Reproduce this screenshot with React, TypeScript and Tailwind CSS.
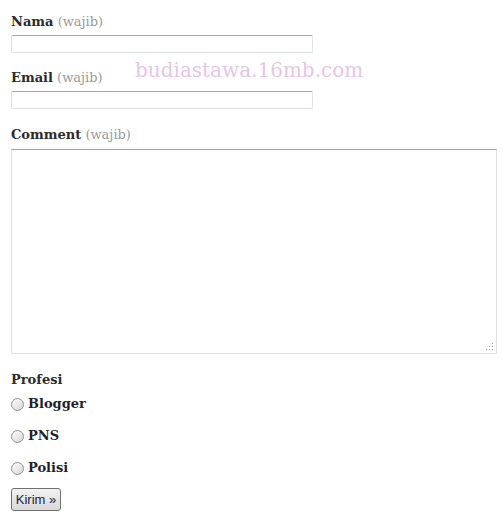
const serif = { fontFamily: '"DejaVu Serif", Georgia, serif' }

function Label({ text, wajib }: { text: string; wajib?: boolean }) {
  return (
    <div className="h-[20px] text-[13px] leading-[24px] text-[#2b2b2b]" style={serif}>
      <span className="font-bold">{text}</span>
      {wajib && <span className="text-[#9a9a9a]"> (wajib)</span>}
    </div>
  )
}

function Radio({ text }: { text: string }) {
  return (
    <div className="flex h-[20px] items-center gap-[4px]">
      <span className="h-[13px] w-[13px] rounded-full border border-[#8f8f8f] bg-gradient-to-br from-[#ffffff] to-[#d4d4d4]" />
      <span className="text-[13px] font-bold leading-[20px] text-[#1f1f2e]" style={serif}>
        {text}
      </span>
    </div>
  )
}

export default function App() {
  return (
    <div className="relative h-[523px] w-[503px] bg-white px-[11px] pt-[10px]">
      <Label text="Nama" wajib />
      <div className="mt-[5px] h-[18px] w-[302px] rounded-[2px] border border-[#dfe1e6] border-t-[#a5a5a5]" />

      <div className="mt-[13px]">
        <Label text="Email" wajib />
      </div>
      <div className="mt-[5px] h-[18px] w-[302px] rounded-[2px] border border-[#dfe1e6] border-t-[#a5a5a5]" />

      <div className="mt-[14px]">
        <Label text="Comment" wajib />
      </div>
      <div className="relative mt-[6px] h-[205px] w-[486px] border border-[#dfe1e6] border-t-[#a5a5a5]">
        <svg className="absolute bottom-[2px] right-[2px]" width="8" height="8" viewBox="0 0 8 8">
          <rect x="6" y="0" width="1" height="1" fill="#9a9a9a" />
          <rect x="3" y="3" width="1" height="1" fill="#9a9a9a" />
          <rect x="6" y="3" width="1" height="1" fill="#9a9a9a" />
          <rect x="0" y="6" width="1" height="1" fill="#9a9a9a" />
          <rect x="3" y="6" width="1" height="1" fill="#9a9a9a" />
          <rect x="6" y="6" width="1" height="1" fill="#9a9a9a" />
        </svg>
      </div>

      <div className="mt-[14px]">
        <Label text="Profesi" />
      </div>
      <div className="mt-[6px] flex flex-col gap-[12px]">
        <Radio text="Blogger" />
        <Radio text="PNS" />
        <Radio text="Polisi" />
      </div>

      <button
        className="mt-[10px] h-[23px] w-[50px] rounded-[3px] border border-[#707070] bg-gradient-to-b from-[#f2f2f2] to-[#d9d9d9] text-[13px] leading-none text-[#1a1a40]"
        style={{ fontFamily: '"Liberation Sans", Arial, sans-serif' }}
      >
        Kirim »
      </button>

      <div
        className="pointer-events-none absolute left-[135px] top-[58px] text-[20px] leading-[24px] text-[#e6c6e6]"
        style={serif}
      >
        budiastawa.16mb.com
      </div>
    </div>
  )
}
